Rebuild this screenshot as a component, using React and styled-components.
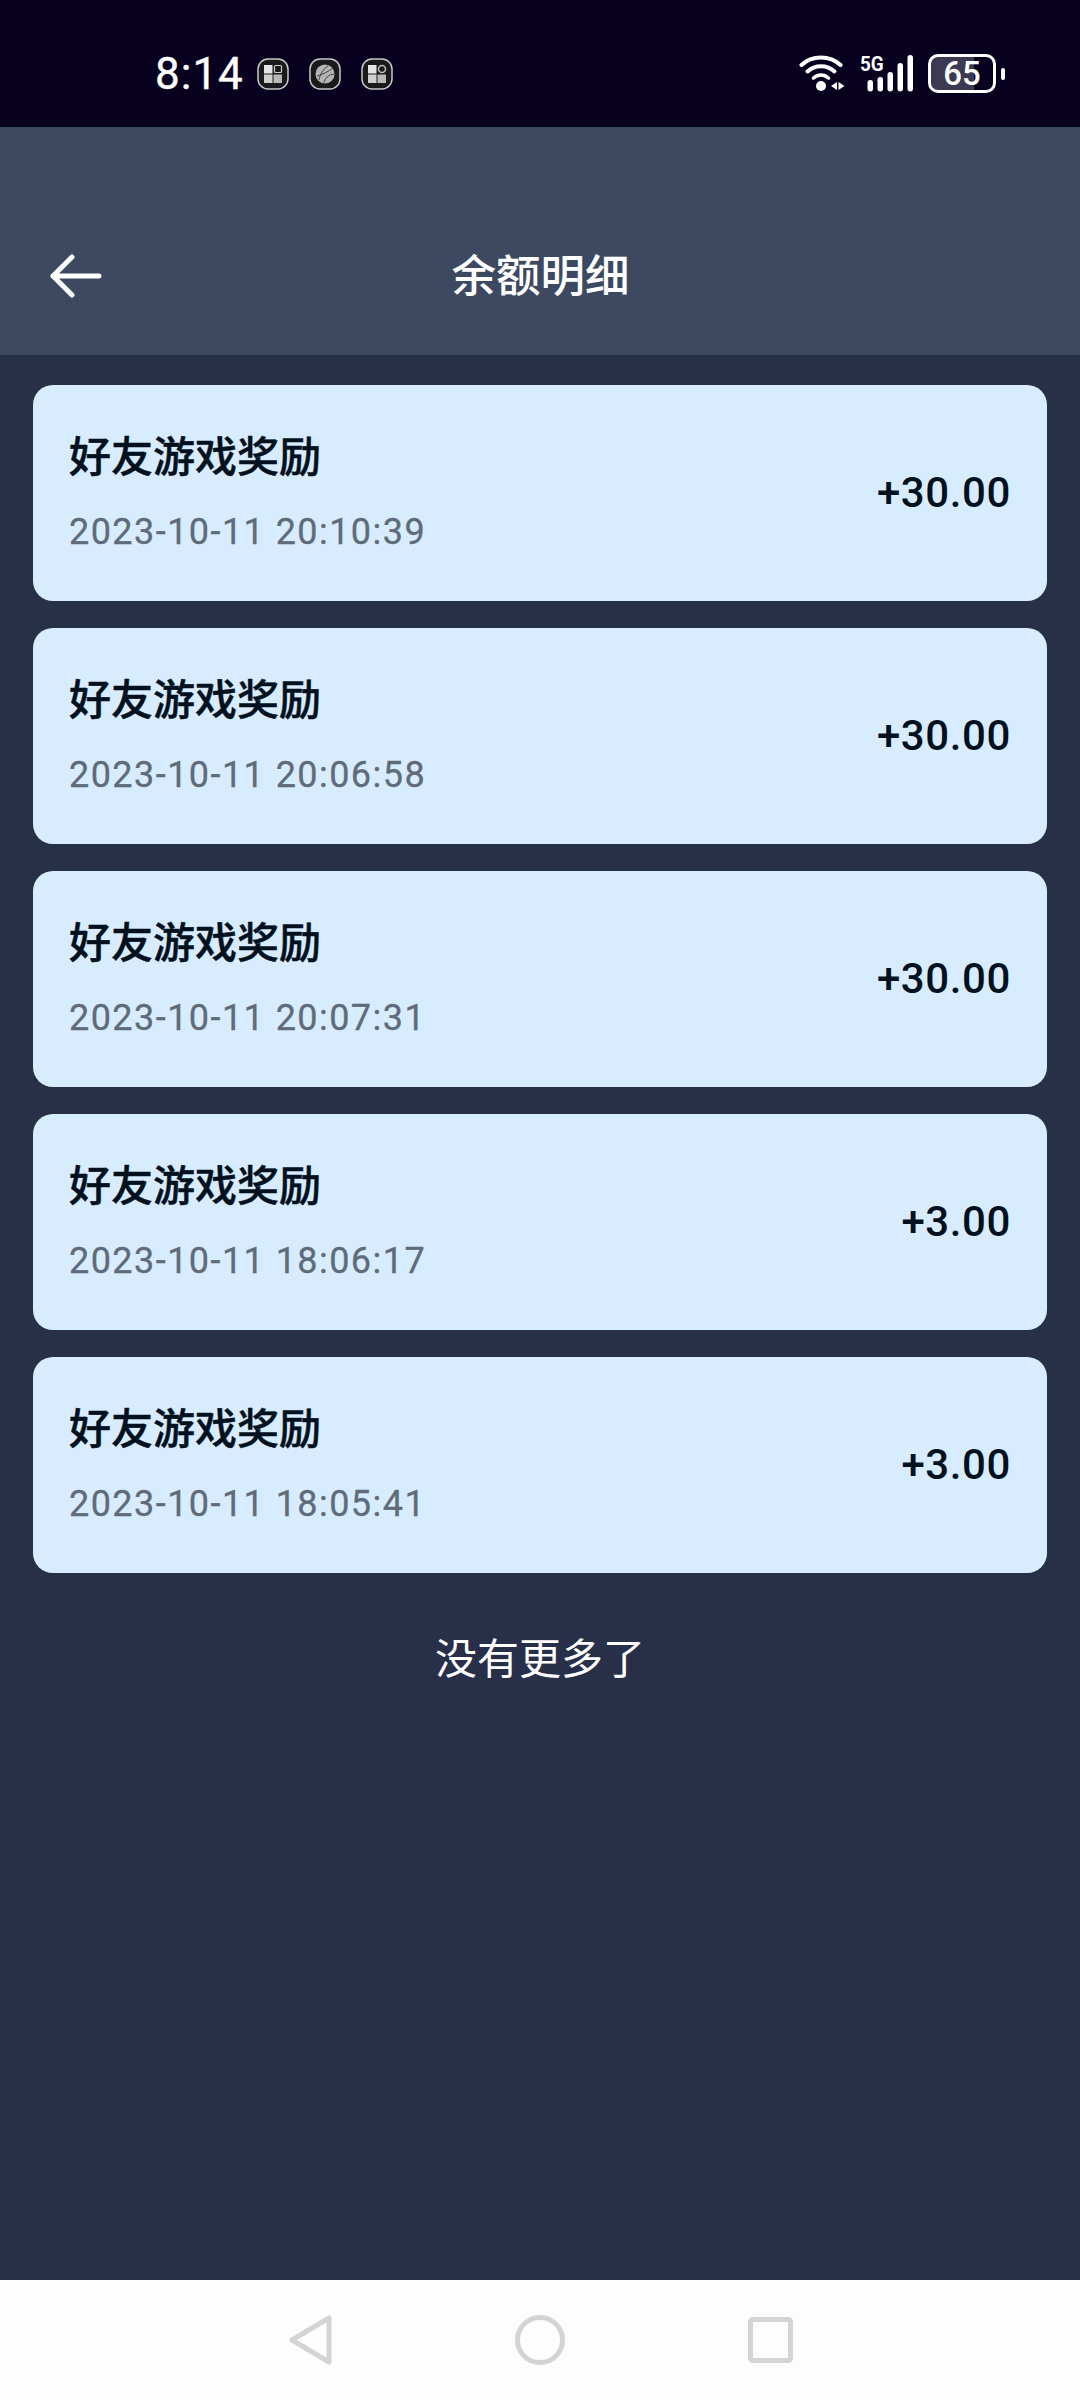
import styled, { createGlobalStyle } from 'styled-components';

const GlobalStyle = createGlobalStyle`
    html, body {
        margin: 0;
        padding: 0;
        background: #282f49;
    }
    * {
        box-sizing: border-box;
    }
`

const Screen = styled.div`
    width: 1080px;
    height: 2400px;
    display: flex;
    flex-direction: column;
    background: #282f49;
    font-family: Inter, "Noto Sans CJK SC", sans-serif;
`

const StatusBar = styled.div`
    height: 127px;
    flex: none;
    display: flex;
    align-items: center;
    padding: 20px 75px 0 155px;
    background: #07001f;
    color: #fff;
`

const Clock = styled.span`
    font-family: Roboto, sans-serif;
    font-size: 44px;
    letter-spacing: 1px;
    margin-right: 13px;
    -webkit-text-stroke: 0.4px #fff;
`

const NotifyIcons = styled.div`
    display: flex;
    gap: 20px;
`

const StatusRight = styled.div`
    margin-left: auto;
    display: flex;
    align-items: center;
`

const FiveG = styled.div`
    position: relative;
    width: 53px;
    height: 37px;
    margin: 0 15px;
`

const FiveGLabel = styled.span`
    position: absolute;
    left: 0;
    top: -1px;
    font-family: Roboto, sans-serif;
    font-size: 21px;
    font-weight: 700;
    line-height: 20px;
    transform: scaleX(0.9);
    transform-origin: left;
`

const Battery = styled.div`
    width: 68px;
    height: 39px;
    display: flex;
    align-items: center;
    justify-content: center;
    border: 3px solid #fff;
    border-radius: 10px;
    background: linear-gradient(90deg, #3b3a52 70%, transparent 70%);
    font-family: Roboto, sans-serif;
    font-size: 33px;
    font-weight: 500;
`

const BatteryCap = styled.div`
    width: 4px;
    height: 12px;
    margin-left: 5px;
    border-radius: 2px;
    background: #fff;
`

const Header = styled.header`
    height: 228px;
    flex: none;
    position: relative;
    display: flex;
    align-items: flex-end;
    justify-content: center;
    padding-bottom: 51px;
    padding-left: 1px;
    background: #3c4961;
`

const Title = styled.h1`
    margin: 0;
    color: #fff;
    font-size: 44.5px;
    font-weight: 500;
    line-height: 56px;
`

const BackIcon = styled.svg`
    position: absolute;
    left: 48px;
    bottom: 55px;
`

const List = styled.main`
    flex: 1;
    display: flex;
    flex-direction: column;
    gap: 27.5px;
    padding: 30px 33px 0;
`

const Card = styled.div`
    height: 215.5px;
    display: flex;
    align-items: center;
    justify-content: space-between;
    padding: 0 36px;
    border-radius: 20px;
    background: #d8ecff;
`

const CardInfo = styled.div`
    display: flex;
    flex-direction: column;
    gap: 27px;
    padding-bottom: 5px;
`

const CardTitle = styled.div`
    color: #03101e;
    font-size: 42px;
    font-weight: 500;
    line-height: 56px;
    -webkit-text-stroke: 0.5px #03101e;
`

const CardTime = styled.div`
    color: #5f6b78;
    font-family: Roboto, sans-serif;
    font-size: 36px;
    letter-spacing: 1.45px;
    line-height: 40px;
    -webkit-text-stroke: 0.3px #5f6b78;
`

const Amount = styled.div`
    color: #03101e;
    font-family: Roboto, sans-serif;
    font-size: 42px;
    font-weight: 500;
    letter-spacing: 0.6px;
`

const EndNote = styled.div`
    margin-top: 31px;
    color: #fff;
    font-size: 42px;
    line-height: 56px;
    text-align: center;
`

const NavBar = styled.nav`
    height: 120px;
    flex: none;
    display: flex;
    align-items: center;
    justify-content: center;
    gap: 183px;
    padding-left: 2px;
    background: #fdfdfd;
`

const records = [
    { time: '2023-10-11 20:10:39', amount: '+30.00' },
    { time: '2023-10-11 20:06:58', amount: '+30.00' },
    { time: '2023-10-11 20:07:31', amount: '+30.00' },
    { time: '2023-10-11 18:06:17', amount: '+3.00' },
    { time: '2023-10-11 18:05:41', amount: '+3.00' },
]

// small app badges in the status bar, the last tile differs per badge
const TileBadge = ({ dot }) => (
    <svg width="32" height="32" viewBox="0 0 32 32">
        <rect x="1" y="1" width="30" height="30" rx="10" fill="#1a1a1c" stroke="#c8c8c8" strokeWidth="1.5" />
        <rect x="7" y="7" width="8.500" height="8.500" fill="#e4e4e4" />
        <rect x="7" y="16.500" width="8.500" height="8.500" fill="#cfcfcf" />
        <rect x="16.500" y="16.500" width="8.500" height="8.500" fill="#b8b8b8" />
        {dot
            ? <circle cx="21" cy="11" r="3.500" fill="none" stroke="#bbb" strokeWidth="1.600" />
            : <rect x="17.500" y="7.500" width="7" height="7" rx="1" fill="none" stroke="#ccc" strokeWidth="1.200" />}
    </svg>
)

const GlobeBadge = () => (
    <svg width="32" height="32" viewBox="0 0 32 32">
        <rect x="1" y="1" width="30" height="30" rx="10" fill="#1a1a1c" stroke="#c8c8c8" strokeWidth="1.5" />
        <circle cx="16" cy="16" r="9.500" fill="#b4b4b4" />
        <path d="M8 18C13 17 20 13 24 10M10 22C11 16 15 10 19 8M15 25C15 21 20 16 25 16" fill="none" stroke="#2a2a2a" strokeWidth="0.800" />
    </svg>
)

const WifiIcon = () => (
    <svg width="46" height="37" viewBox="0 0 46 37">
        <path d="M2.500 10C13 0 31 0 41.500 10" fill="none" stroke="#fff" strokeWidth="4" strokeLinecap="round" />
        <path d="M8.500 16.500C16 9.500 28 9.500 35.500 16.500" fill="none" stroke="#fff" strokeWidth="4" strokeLinecap="round" />
        <path d="M14.500 23C19 19 25 19 29.500 23" fill="none" stroke="#fff" strokeWidth="3.500" strokeLinecap="round" />
        <circle cx="22" cy="31" r="5" fill="#fff" />
        <path d="M32 31L38 27V35ZM39.500 27L45.500 31L39.500 35Z" fill="#fff" />
    </svg>
)

const SignalBars = () => (
    <svg width="53" height="37" viewBox="0 0 53 37">
        <rect x="7.500" y="25" width="5.500" height="11.500" rx="2.700" fill="#fff" />
        <rect x="17.500" y="22" width="5.500" height="14.500" rx="2.700" fill="#fff" />
        <rect x="27.500" y="17" width="5.500" height="19.500" rx="2.700" fill="#fff" />
        <rect x="37.500" y="8" width="5.500" height="28.500" rx="2.700" fill="#fff" />
        <rect x="47.500" y="0" width="5.500" height="36.500" rx="2.700" fill="#fff" />
    </svg>
)

const App = () => {
    return (
        <Screen>
            <GlobalStyle />
            <StatusBar>
                <Clock>8:14</Clock>
                <NotifyIcons>
                    <TileBadge />
                    <GlobeBadge />
                    <TileBadge dot />
                </NotifyIcons>
                <StatusRight>
                    <WifiIcon />
                    <FiveG>
                        <SignalBars />
                        <FiveGLabel>5G</FiveGLabel>
                    </FiveG>
                    <Battery>65</Battery>
                    <BatteryCap />
                </StatusRight>
            </StatusBar>
            <Header>
                <BackIcon width="54" height="48" viewBox="0 0 54 48">
                    <path d="M5 24H51M24 5L5 24L24 43" fill="none" stroke="#fff" strokeWidth="5" strokeLinecap="round" strokeLinejoin="round" />
                </BackIcon>
                <Title>余额明细</Title>
            </Header>
            <List>
                {records.map((record) => (
                    <Card key={record.time}>
                        <CardInfo>
                            <CardTitle>好友游戏奖励</CardTitle>
                            <CardTime>{record.time}</CardTime>
                        </CardInfo>
                        <Amount>{record.amount}</Amount>
                    </Card>
                ))}
                <EndNote>没有更多了</EndNote>
            </List>
            <NavBar>
                <svg width="43" height="50" viewBox="0 0 43 50">
                    <path d="M40 3L3 25L40 47Z" fill="none" stroke="#d4d4d4" strokeWidth="5" strokeLinejoin="round" />
                </svg>
                <svg width="50" height="50" viewBox="0 0 50 50">
                    <circle cx="25" cy="25" r="22.500" fill="none" stroke="#d4d4d4" strokeWidth="5" />
                </svg>
                <svg width="45" height="46" viewBox="0 0 45 46">
                    <rect x="2.500" y="2.500" width="40" height="41" rx="2" fill="none" stroke="#d4d4d4" strokeWidth="5" />
                </svg>
            </NavBar>
        </Screen>
    )
}

export default App;
